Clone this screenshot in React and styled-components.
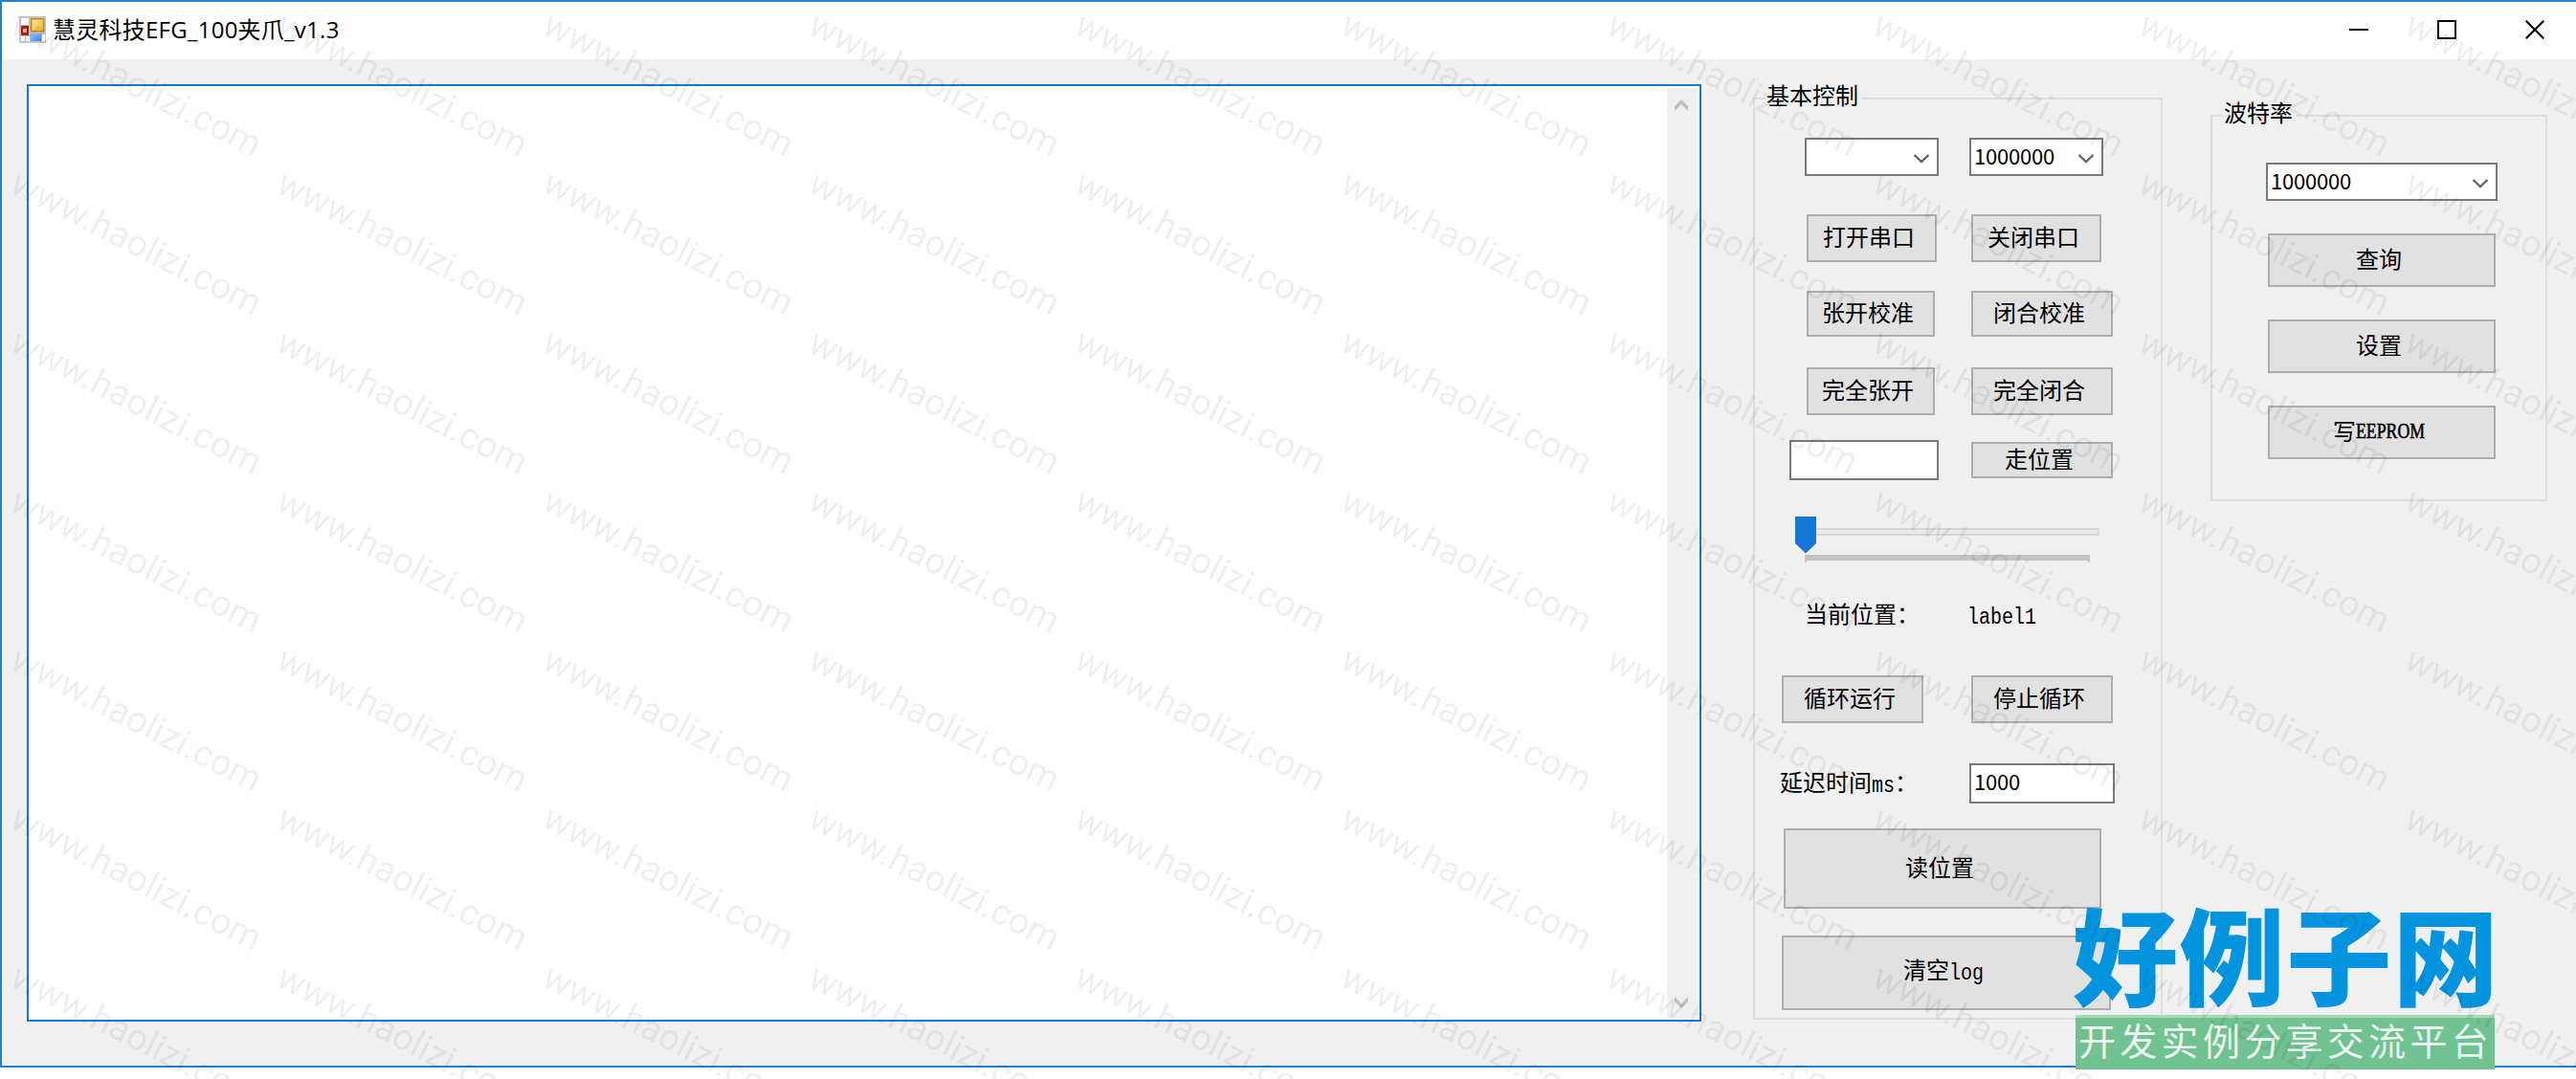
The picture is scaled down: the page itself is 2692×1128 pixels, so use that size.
import React, { useState } from "react";
import styled, { createGlobalStyle } from "styled-components";

const GlobalStyle = createGlobalStyle`
  * {
    box-sizing: border-box;
  }
  body {
    margin: 0;
    background: #fff;
    overflow: hidden;
    font-family: "Noto Sans CJK SC", "Liberation Sans", sans-serif;
    color: #000;
  }
`;

const Screen = styled.div`
  position: relative;
  width: 2692px;
  height: 1128px;
  overflow: hidden;
  background: #fff;
`;

const Window = styled.div`
  display: flex;
  flex-direction: column;
  height: 1116px;
  border: 2px solid #1e82d4;
  border-right: none;
  background: #f0f0f0;
`;

const TitleBar = styled.div`
  display: flex;
  align-items: center;
  height: 60px;
  flex-shrink: 0;
  padding: 0 0 2px 18px;
  background: #fff;
`;

const Title = styled.span`
  flex: 1;
  margin-left: 7px;
  font-family: "Open Sans", "Noto Sans CJK SC", sans-serif;
  font-size: 24px;
  line-height: 34px;
  letter-spacing: 0.25px;
`;

const WindowButtons = styled.div`
  display: flex;
  gap: 72px;
  padding-right: 33px;
`;

const Body = styled.div`
  display: flex;
  align-items: flex-start;
  flex: 1;
  padding: 26px 0 0 26px;
`;

const LogBox = styled.div`
  display: flex;
  justify-content: flex-end;
  width: 1750px;
  height: 980px;
  padding: 2px;
  border: 2px solid #1479d4;
  background: #fff;
`;

const ScrollBar = styled.div`
  display: flex;
  flex-direction: column;
  justify-content: space-between;
  align-items: center;
  width: 32px;
  padding: 12px 2px 10px 0;
  background: #f0f0f0;
`;

const Group = styled.div`
  position: relative;
  width: ${(props) => props.$width}px;
  height: ${(props) => props.$height}px;
  margin: ${(props) => props.$margin};
  border: 2px solid #dcdcdc;
`;

const Legend = styled.span`
  position: absolute;
  top: -21px;
  left: 11px;
  padding: 0 3px 0 1px;
  background: #f0f0f0;
  font-size: 24px;
  line-height: 32px;
`;

const Row = styled.div`
  display: flex;
  align-items: center;
  gap: ${(props) => props.$gap || 0}px;
  margin: ${(props) => props.$top}px 0 0 ${(props) => props.$left}px;
`;

const Button = styled.button`
  display: flex;
  align-items: center;
  justify-content: center;
  width: ${(props) => props.$width}px;
  height: ${(props) => props.$height || 50}px;
  padding: 0 6px 4px 0;
  border: 2px solid #adadad;
  border-radius: 0;
  background: #e1e1e1;
  color: #000;
  font-family: inherit;
  font-size: 24px;
  line-height: 24px;
  white-space: nowrap;
`;

const Field = styled.div`
  display: flex;
  align-items: flex-start;
  justify-content: space-between;
  width: ${(props) => props.$width}px;
  height: ${(props) => props.$height || 40}px;
  padding: 3px 7px 0 3px;
  border: 2px solid #7a7a7a;
  background: #fff;
  font-size: 22px;
  line-height: 26px;
  letter-spacing: -0.2px;

  svg {
    margin-top: 11px;
  }
`;

const Label = styled.div`
  width: ${(props) => props.$width}px;
  height: 26px;
  margin: -2px 0 0 -2px;
  font-size: 24px;
  line-height: 24px;
  white-space: nowrap;
`;

const Mono = styled.span`
  display: inline-block;
  font-family: "Liberation Mono", monospace;
  font-size: 20px;
  transform: scaleY(1.15);
`;

const Caps = styled.span`
  display: inline-block;
  width: 72px;
  font-family: "Liberation Serif", serif;
  font-size: 24px;
  transform: scaleX(0.74);
  transform-origin: 0 50%;
  -webkit-text-stroke: 0.6px #000;
`;

const Brand = styled.div`
  position: absolute;
  left: 2166px;
  top: 940px;
  width: 444px;
`;

const BrandName = styled.div`
  height: 121px;
  color: #0394e0;
  font-size: 110px;
  font-weight: 900;
  line-height: 110px;
  letter-spacing: 1.6px;
  white-space: nowrap;
`;

const BrandSlogan = styled.div`
  width: 438px;
  height: 57px;
  margin-left: 3px;
  padding-left: 3px;
  border-top: 3px solid #a9d9ba;
  background: #70c290;
  color: rgba(255, 255, 255, 0.88);
  font-size: 39px;
  line-height: 45px;
  letter-spacing: 4.3px;
  white-space: nowrap;
  overflow: hidden;
`;

const Watermarks = styled.div`
  position: absolute;
  inset: 0;
  display: grid;
  grid-template-columns: repeat(10, 278px);
  grid-auto-rows: 166px;
  padding: 3px 0 0 9px;
  overflow: hidden;
  pointer-events: none;
`;

const Mark = styled.span`
  font-family: Roboto, sans-serif;
  font-size: 38px;
  line-height: 36px;
  color: rgba(0, 0, 0, 0.07);
  transform: rotate(27deg);
  transform-origin: 0 30px;
  white-space: nowrap;
`;

const AppIcon = () => (
  <svg width="28" height="28" viewBox="0 0 28 28">
    <defs>
      <linearGradient id="gold" x1="0" y1="0" x2="1" y2="1">
        <stop offset="0" stopColor="#ffe9a0" />
        <stop offset="1" stopColor="#eeb01c" />
      </linearGradient>
      <linearGradient id="blue" x1="0" y1="0" x2="1" y2="1">
        <stop offset="0" stopColor="#9cc4ff" />
        <stop offset="1" stopColor="#3f7fe8" />
      </linearGradient>
    </defs>
    <rect width="28" height="28" fill="#c4c4c4" />
    <rect x="2" y="2" width="8" height="7" fill="#fff" />
    <rect x="2" y="21" width="4" height="5" fill="#f4f4f4" />
    <rect x="7" y="21" width="4" height="5" fill="#fff" />
    <rect x="24" y="19" width="3" height="7" fill="#fff" />
    <rect x="2" y="10" width="8" height="10" fill="#b01c1c" />
    <rect x="4" y="13" width="4" height="4" fill="#f0a8a0" />
    <rect x="12.7" y="2.7" width="13" height="13" fill="url(#gold)" stroke="#c08a10" strokeWidth="1.4" />
    <rect x="12" y="18" width="11" height="8" fill="url(#blue)" />
  </svg>
);

const Chevron = () => (
  <svg width="18" height="12" viewBox="0 0 18 12">
    <path d="M1.5 2 L9 9.2 L16.5 2" fill="none" stroke="#666" strokeWidth="2.4" />
  </svg>
);

const ScrollArrow = ({ down }) => (
  <svg width="14" height="12" viewBox="0 0 14 12">
    <path
      d={down ? "M0 0 L7 7 L14 0 V5 L7 12 L0 5 Z" : "M0 12 L7 5 L14 12 V7 L7 0 L0 7 Z"}
      fill="#bfbfbf"
    />
  </svg>
);

const Slider = () => (
  <svg width="320" height="48" viewBox="0 0 320 48">
    <rect x="3" y="13" width="314" height="6" fill="#e7eaea" stroke="#d6d6d6" strokeWidth="2" />
    <path d="M10 40 H308 V48 H306 V46 H12 V48 H10 Z" fill="#c3c3c3" />
    <path d="M0 0 H22 V28 L11 38.5 L0 28 Z" fill="#1479d6" />
  </svg>
);

const App = () => {
  const [baud] = useState("1000000");
  const marks = Array.from({ length: 70 });

  return (
    <Screen>
      <GlobalStyle />
      <Window>
        <TitleBar>
          <AppIcon />
          <Title>慧灵科技EFG_100夹爪_v1.3</Title>
          <WindowButtons>
            <svg width="20" height="20">
              <path d="M0 10 H20" stroke="#000" strokeWidth="2" />
            </svg>
            <svg width="20" height="20">
              <rect x="1" y="1" width="18" height="18" fill="none" stroke="#000" strokeWidth="2" />
            </svg>
            <svg width="20" height="20">
              <path d="M0.7 0.7 L19.3 19.3 M19.3 0.7 L0.7 19.3" stroke="#000" strokeWidth="2" />
            </svg>
          </WindowButtons>
        </TitleBar>
        <Body>
          <LogBox>
            <ScrollBar>
              <ScrollArrow />
              <ScrollArrow down />
            </ScrollBar>
          </LogBox>
          <Group $width={428} $height={964} $margin="14px 0 0 54px">
            <Legend>基本控制</Legend>
            <Row $top={40} $left={52} $gap={32}>
              <Field $width={140}>
                <span />
                <Chevron />
              </Field>
              <Field $width={140}>
                {baud}
                <Chevron />
              </Field>
            </Row>
            <Row $top={40} $left={54} $gap={36}>
              <Button $width={136}>打开串口</Button>
              <Button $width={136}>关闭串口</Button>
            </Row>
            <Row $top={30} $left={54} $gap={38}>
              <Button $width={134} $height={48}>张开校准</Button>
              <Button $width={148} $height={48}>闭合校准</Button>
            </Row>
            <Row $top={32} $left={54} $gap={38}>
              <Button $width={134}>完全张开</Button>
              <Button $width={148}>完全闭合</Button>
            </Row>
            <Row $top={26} $left={36} $gap={34}>
              <Field $width={156} $height={42} />
              <Button $width={148} $height={38}>走位置</Button>
            </Row>
            <Row $top={38} $left={42}>
              <Slider />
            </Row>
            <Row $top={43} $left={54}>
              <Label $width={172}>当前位置：</Label>
              <Label>
                <Mono>label1</Mono>
              </Label>
            </Row>
            <Row $top={51} $left={28} $gap={50}>
              <Button $width={148}>循环运行</Button>
              <Button $width={148}>停止循环</Button>
            </Row>
            <Row $top={42} $left={28}>
              <Label $width={198}>
                延迟时间<Mono>ms</Mono>：
              </Label>
              <Field $width={152} $height={42}>1000</Field>
            </Row>
            <Row $top={26} $left={30}>
              <Button $width={332} $height={84}>读位置</Button>
            </Row>
            <Row $top={28} $left={28}>
              <Button $width={344} $height={78}>
                <span>
                  清空<Mono>log</Mono>
                </span>
              </Button>
            </Row>
          </Group>
          <Group $width={352} $height={404} $margin="32px 0 0 50px">
            <Legend>波特率</Legend>
            <Row $top={48} $left={56}>
              <Field $width={242}>
                {baud}
                <Chevron />
              </Field>
            </Row>
            <Row $top={34} $left={58}>
              <Button $width={238} $height={56}>查询</Button>
            </Row>
            <Row $top={34} $left={58}>
              <Button $width={238} $height={56}>设置</Button>
            </Row>
            <Row $top={34} $left={58}>
              <Button $width={238} $height={56}>
                写<Caps>EEPROM</Caps>
              </Button>
            </Row>
          </Group>
        </Body>
      </Window>
      <Brand>
        <BrandName>好例子网</BrandName>
        <BrandSlogan>开发实例分享交流平台</BrandSlogan>
      </Brand>
      <Watermarks>
        {marks.map((_, index) => (
          <Mark key={index}>www.haolizi.com</Mark>
        ))}
      </Watermarks>
    </Screen>
  );
};

export default App;
